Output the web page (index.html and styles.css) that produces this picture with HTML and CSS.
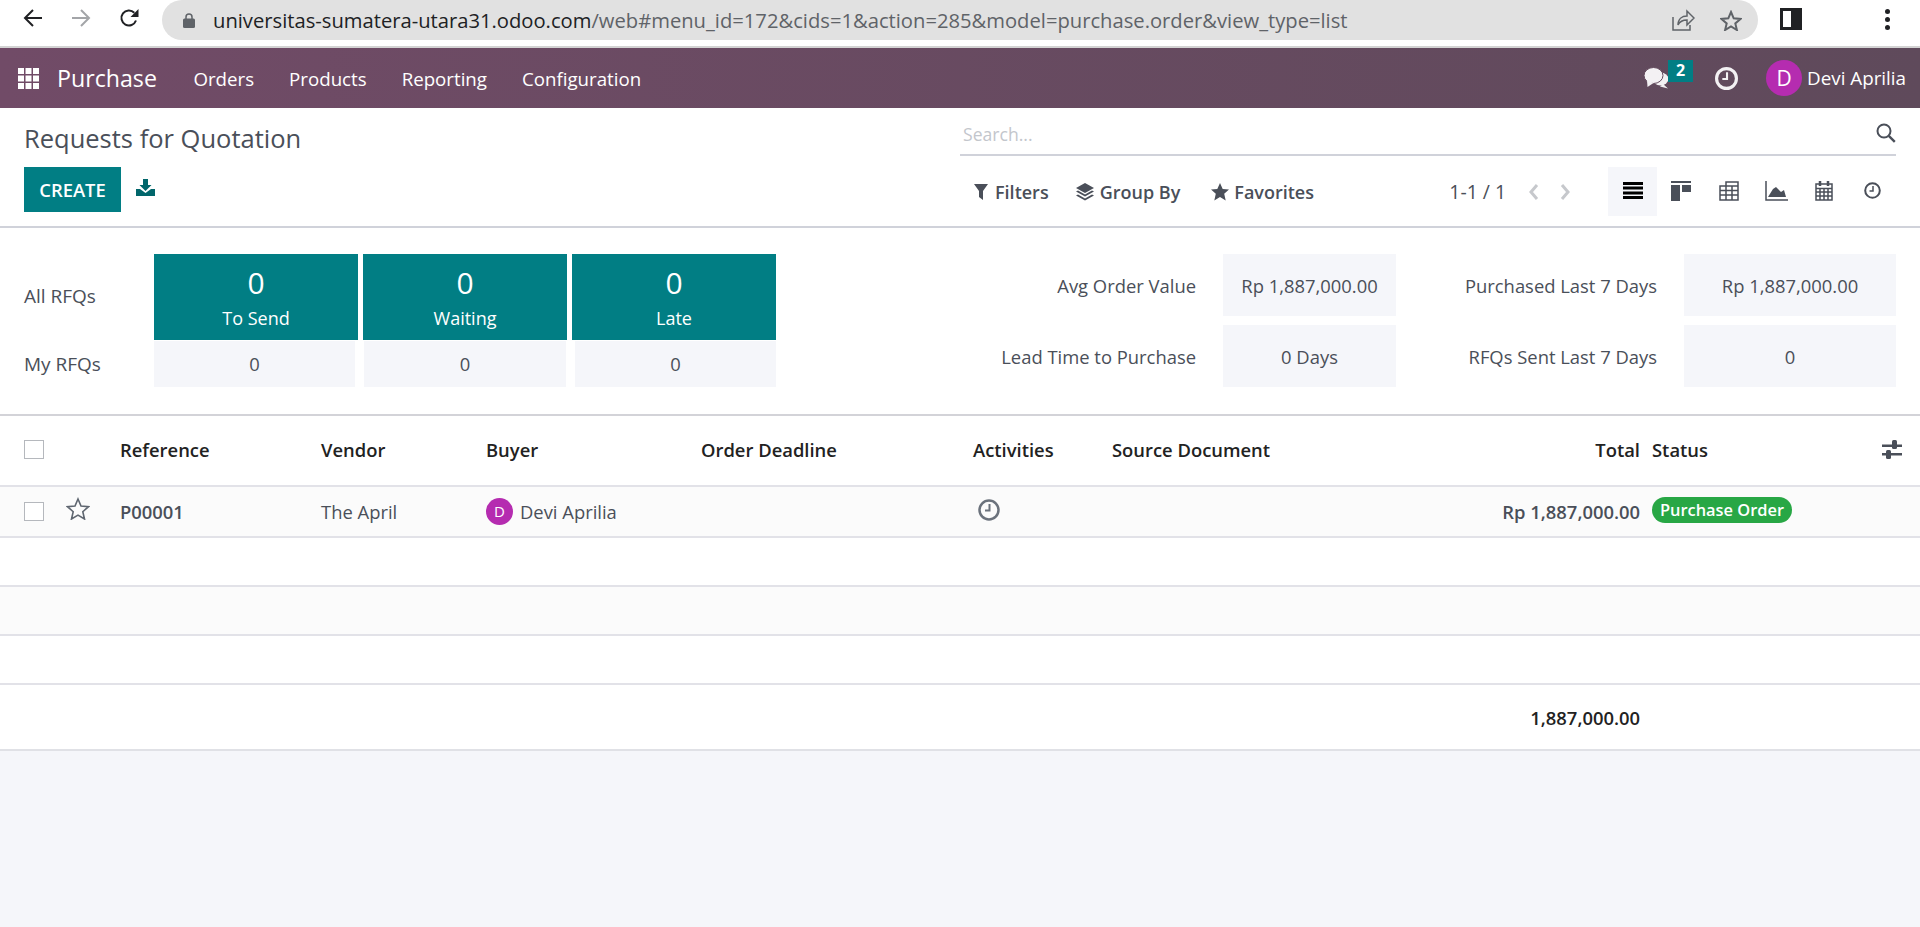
FILE: index.html
```html
<!DOCTYPE html>
<html>

<head>
    <meta http-equiv="Content-Type" content="text/html" charset="utf-8">
    <title>Requests for Quotation - Odoo</title>
    <link rel="stylesheet" href="styles.css">
</head>

<body>
    <div class="browser-bar">
        <svg class="nav-icon" viewBox="0 0 20 20"><path d="M19 10H2M10 2l-8 8 8 8" fill="none" stroke="#202124" stroke-width="2"/></svg>
        <svg class="nav-icon" viewBox="0 0 20 20"><path d="M1 10h17M10 2l8 8-8 8" fill="none" stroke="#a3a5a8" stroke-width="2"/></svg>
        <svg class="nav-icon" viewBox="0 0 20 20"><path d="M17 12.5A7.5 7.5 0 1 1 15.3 4.7" fill="none" stroke="#202124" stroke-width="2"/><path d="M19.5 1v8h-8z" fill="#202124"/></svg>
        <div class="omnibox">
            <svg class="lock" viewBox="0 0 12 15"><path d="M3 6V4a3 3 0 0 1 6 0v2" fill="none" stroke="#5f6368" stroke-width="1.5"/><rect y="5.5" width="12" height="9.5" rx="1.5" fill="#5f6368"/></svg>
            <span class="url"><span class="url-host">universitas-sumatera-utara31.odoo.com</span>/web#menu_id=172&amp;cids=1&amp;action=285&amp;model=purchase.order&amp;view_type=list</span>
            <svg class="share" viewBox="0 0 23 22"><path d="M1 8v13h17v-5M6 16c0-6 4-9 9-9V2l7 7-7 7v-5c-4 0-7 1-9 5z" fill="none" stroke="#5f6368" stroke-width="1.5"/></svg>
            <svg class="bookmark" viewBox="0 0 22 21"><path d="M11 2l2.7 6.3 6.8.6-5.2 4.5 1.6 6.6-5.9-3.500-5.900 3.500 1.600-6.600L1.500 8.900l6.800-.6z" fill="none" stroke="#5f6368" stroke-width="2"/></svg>
        </div>
        <div class="side-panel"></div>
        <div class="chrome-menu"><i></i><i></i><i></i></div>
    </div>

    <div class="navbar">
        <svg class="apps" viewBox="0 0 21 21" fill="#fff"><rect width="6" height="6"/><rect x="7.5" width="6" height="6"/><rect x="15" width="6" height="6"/><rect y="7.5" width="6" height="6"/><rect x="7.5" y="7.5" width="6" height="6"/><rect x="15" y="7.5" width="6" height="6"/><rect y="15" width="6" height="6"/><rect x="7.5" y="15" width="6" height="6"/><rect x="15" y="15" width="6" height="6"/></svg>
        <span class="brand">Purchase</span>
        <span class="menu-item">Orders</span>
        <span class="menu-item">Products</span>
        <span class="menu-item">Reporting</span>
        <span class="menu-item">Configuration</span>
        <div class="systray">
            <div class="chat">
                <svg class="chat-icon" viewBox="0 0 25 22" fill="#f3f1f3"><ellipse cx="16.5" cy="12" rx="8" ry="6.5"/><path d="M19 17l5 4.5-8-2z"/><ellipse cx="9.5" cy="8.5" rx="9.5" ry="8" stroke="#62495c" stroke-width="1"/><path d="M3 13l.5 7 6-4z"/></svg>
                <span class="chat-badge">2</span>
            </div>
            <svg class="tray-clock" viewBox="0 0 22 22"><circle cx="11" cy="11" r="9.5" fill="none" stroke="#f3f1f3" stroke-width="3"/><path d="M11.5 5v6.5H7" fill="none" stroke="#f3f1f3" stroke-width="2"/></svg>
            <span class="user-avatar">D</span>
            <span class="user-name">Devi Aprilia</span>
        </div>
    </div>

    <div class="control-panel">
        <div class="cp-left">
            <div class="title">Requests for Quotation</div>
            <div class="cp-buttons">
                <button class="create-btn">CREATE</button>
                <svg class="download" viewBox="0 0 19 17" fill="#01666b"><path d="M7 0h5v6h3.5L9.5 12 3.500 6H7z"/><path d="M0 10h4l5.500 4 5.500-4h4v7H0z"/></svg>
            </div>
        </div>
        <div class="cp-right">
            <div class="search-row">
                <span class="search-text">Search...</span>
                <svg class="search-icon" viewBox="0 0 20 20"><circle cx="8" cy="8" r="6.5" fill="none" stroke="#4a4f59" stroke-width="2"/><path d="M12.8 12.8l6 6" stroke="#4a4f59" stroke-width="2.4"/></svg>
            </div>
            <div class="tools-row">
                <span class="tool">
                    <svg class="tool-icon filter" viewBox="0 0 14 16" fill="#4a4f59"><path d="M0 0h14L9 7v9L5 13V7z"/></svg>Filters
                </span>
                <span class="tool">
                    <svg class="tool-icon layers" viewBox="0 0 20 20" fill="#4a4f59"><path d="M10 1l9 5-9 5-9-5z"/><path d="M1 9.5l2-1 7 4 7-4 2 1-9 5z"/><path d="M1 13.5l2-1 7 4 7-4 2 1-9 5z"/></svg>Group By
                </span>
                <span class="tool">
                    <svg class="tool-icon fav" viewBox="0 0 18 18" fill="#4a4f59"><path d="M9 0l2.7 6 6.3.6-4.8 4.2 1.5 6.7L9 14l-5.700 3.500 1.500-6.700L0 6.600 6.300 6z"/></svg>Favorites
                </span>
                <span class="pager">1-1 / 1</span>
                <svg class="chevron" viewBox="0 0 11 18"><path d="M9 2L3 9l6 7" fill="none" stroke="#c6c8cc" stroke-width="3"/></svg>
                <svg class="chevron next" viewBox="0 0 11 18"><path d="M2 2l6 7-6 7" fill="none" stroke="#c6c8cc" stroke-width="3"/></svg>
                <div class="views">
                    <span class="view active">
                        <svg width="20" height="17" viewBox="0 0 20 17" fill="#000"><rect width="20" height="3"/><rect y="4.5" width="20" height="3"/><rect y="9.5" width="20" height="3"/><rect y="14" width="20" height="3"/></svg>
                    </span>
                    <span class="view">
                        <svg width="20" height="20" viewBox="0 0 20 20" fill="#4a4f59"><rect width="20" height="2"/><rect y="4" width="9" height="16"/><rect x="11" y="4" width="9" height="7"/></svg>
                    </span>
                    <span class="view">
                        <svg width="20" height="20" viewBox="0 0 20 20" fill="none" stroke="#4a4f59" stroke-width="1.5"><path d="M1 5h18v14H1zM1 9.5h18M1 14h18M7 5v14M13 5v14M7 1h12v4H7z"/></svg>
                    </span>
                    <span class="view">
                        <svg width="23" height="20" viewBox="0 0 23 20" fill="#4a4f59"><path d="M1 0v19h22" fill="none" stroke="#4a4f59" stroke-width="1.5"/><path d="M3 16l5-8 3-2 5 5 3-2 2 7z"/></svg>
                    </span>
                    <span class="view">
                        <svg width="18" height="20" viewBox="0 0 18 20" fill="none" stroke="#4a4f59" stroke-width="1.5"><path d="M1 3h16v16H1zM1 7.5h16M1 11h16M1 15h16M5 7.5V19M9 7.5V19M13 7.5V19"/><path d="M5 0v5M13 0v5" stroke-width="2.5"/></svg>
                    </span>
                    <span class="view">
                        <svg width="17" height="17" viewBox="0 0 17 17" fill="none" stroke="#4a4f59"><circle cx="8.5" cy="8.5" r="7.3" stroke-width="2"/><path d="M9 4v5H5.5" stroke-width="1.5"/></svg>
                    </span>
                </div>
            </div>
        </div>
    </div>

    <div class="dashboard">
        <div class="rfq-grid">
            <span class="rfq-label top">All RFQs</span>
            <div class="tile"><b>0</b><span>To Send</span></div>
            <div class="tile"><b>0</b><span>Waiting</span></div>
            <div class="tile"><b>0</b><span>Late</span></div>
            <span class="rfq-label">My RFQs</span>
            <div class="my-cell first">0</div>
            <div class="my-cell middle">0</div>
            <div class="my-cell last">0</div>
        </div>
        <div class="stat-grid">
            <span class="stat-label">Avg Order Value</span>
            <div class="stat-box">Rp 1,887,000.00</div>
            <span class="stat-label">Purchased Last 7 Days</span>
            <div class="stat-box">Rp 1,887,000.00</div>
            <span class="stat-label">Lead Time to Purchase</span>
            <div class="stat-box">0 Days</div>
            <span class="stat-label">RFQs Sent Last 7 Days</span>
            <div class="stat-box">0</div>
        </div>
    </div>

    <table class="list">
        <colgroup>
            <col class="c-check">
            <col class="c-star">
            <col class="c-ref">
            <col class="c-vendor">
            <col class="c-buyer">
            <col class="c-deadline">
            <col class="c-activity">
            <col class="c-source">
            <col class="c-total">
            <col class="c-status">
            <col>
        </colgroup>
        <thead>
            <tr>
                <th><span class="checkbox"></span></th>
                <th></th>
                <th>Reference</th>
                <th>Vendor</th>
                <th>Buyer</th>
                <th>Order Deadline</th>
                <th>Activities</th>
                <th>Source Document</th>
                <th class="num">Total</th>
                <th class="status-col">Status</th>
                <th>
                    <svg class="options" viewBox="0 0 20 20" fill="#4a4f59"><rect y="4.5" width="20" height="2.5"/><rect x="10" y="0" width="5" height="9" rx="1.5"/><rect y="13" width="20" height="2.5"/><rect x="4" y="10" width="5" height="9" rx="1.5"/></svg>
                </th>
            </tr>
        </thead>
        <tbody>
            <tr class="row-data">
                <td><span class="checkbox"></span></td>
                <td>
                    <svg class="star" viewBox="0 0 24 23"><path d="M12 2l3 7 7.5.7-5.7 5 1.700 7.300-6.500-3.900L5.500 22l1.700-7.300-5.700-5L9 9z" fill="none" stroke="#5f6670" stroke-width="1.6"/></svg>
                </td>
                <td class="strong">P00001</td>
                <td>The April</td>
                <td><span class="buyer"><span class="buyer-avatar">D</span>Devi Aprilia</span></td>
                <td></td>
                <td>
                    <svg class="activity" viewBox="0 0 22 22"><circle cx="11" cy="11" r="9.5" fill="none" stroke="#6b727c" stroke-width="2.5"/><path d="M11.5 5v6.5H7" fill="none" stroke="#6b727c" stroke-width="2"/></svg>
                </td>
                <td></td>
                <td class="num strong">Rp 1,887,000.00</td>
                <td class="status-col"><span class="status-pill">Purchase Order</span></td>
                <td></td>
            </tr>
            <tr class="row-empty"><td colspan="11"></td></tr>
            <tr class="row-empty stripe"><td colspan="11"></td></tr>
            <tr class="row-empty"><td colspan="11"></td></tr>
        </tbody>
        <tfoot>
            <tr>
                <td colspan="8"></td>
                <td class="num sum">1,887,000.00</td>
                <td colspan="2"></td>
            </tr>
        </tfoot>
    </table>
</body>

</html>
```

FILE: styles.css
```css
html,
body {
    margin: 0;
    height: 927px;
    overflow: hidden;
}

body {
    background-color: #f5f6fa;
    font-family: 'Open Sans', 'Noto Sans', sans-serif;
    font-size: 18.4px;
    color: #4a4f59;
}

svg {
    display: block;
    flex: none;
}

/* browser chrome */
.browser-bar {
    display: flex;
    height: 46px;
    background-color: #fff;
    border-bottom: 2px solid #d3d3d3;
    padding-left: 23px;
}

.nav-icon {
    width: 20px;
    height: 20px;
    margin: 8px 28px 0 0;
}

.omnibox {
    display: flex;
    align-items: center;
    width: 1596px;
    height: 40px;
    margin-left: -5px;
    padding-left: 21px;
    box-sizing: border-box;
    background-color: #e1e1e1;
    border-radius: 20px;
}

.lock {
    width: 12px;
    height: 15px;
}

.url {
    width: 1459px;
    margin-left: 18px;
    font-size: 20.2px;
    color: #5f6368;
    white-space: nowrap;
}

.url-host {
    color: #202124;
}

.share {
    width: 23px;
    height: 22px;
}

.bookmark {
    width: 22px;
    height: 21px;
    margin-left: 25px;
}

.side-panel {
    width: 22px;
    height: 22px;
    margin: 8px 0 0 22px;
    box-sizing: border-box;
    background: linear-gradient(90deg, #fff 50%, #202124 50%);
    border: 3px solid #202124;
}

.chrome-menu {
    display: flex;
    flex-direction: column;
    gap: 3px;
    margin: 9px 0 0 83px;
}

.chrome-menu i {
    width: 5px;
    height: 5px;
    border-radius: 50%;
    background-color: #202124;
}

/* odoo navbar */
.navbar {
    display: flex;
    align-items: center;
    height: 60px;
    padding-left: 18px;
    background: linear-gradient(90deg, #714b67, #5f4a5b);
    color: #fff;
}

.apps {
    width: 21px;
    height: 21px;
    margin-right: 18px;
}

.brand {
    font-size: 23.2px;
    margin-right: 19px;
}

.menu-item {
    padding: 0 17.5px;
    font-size: 18.7px;
}

.systray {
    display: flex;
    align-items: center;
    margin-left: auto;
    padding-right: 14px;
}

.chat {
    position: relative;
    width: 49px;
    height: 48px;
}

.chat-icon {
    position: absolute;
    left: 0;
    top: 13px;
    width: 25px;
    height: 22px;
}

.chat-badge {
    position: absolute;
    left: 24px;
    top: 6px;
    width: 25px;
    height: 22px;
    background-color: #017e84;
    font-size: 16px;
    font-weight: 700;
    line-height: 20px;
    text-align: center;
}

.tray-clock {
    width: 23px;
    height: 23px;
    margin: 0 28px 0 22px;
}

.user-avatar {
    width: 36px;
    height: 36px;
    border-radius: 50%;
    background-color: #b52cb0;
    font-size: 21px;
    line-height: 36px;
    text-align: center;
}

.user-name {
    margin-left: 5px;
    font-size: 18.8px;
}

/* control panel */
.control-panel {
    display: grid;
    grid-template-columns: 960px 936px;
    height: 118px;
    background-color: #fff;
    border-bottom: 2px solid #d0d2da;
}

.cp-left {
    padding-left: 24px;
}

.title {
    height: 59px;
    padding-top: 10px;
    box-sizing: border-box;
    font-size: 25.5px;
    line-height: 40px;
}

.cp-buttons {
    display: flex;
    align-items: flex-start;
}

.create-btn {
    width: 97px;
    height: 45px;
    border: 0;
    padding: 0;
    background-color: #017e84;
    color: #fff;
    font-family: inherit;
    font-size: 18.4px;
    font-weight: 600;
}

.download {
    width: 19px;
    height: 17px;
    margin: 12px 0 0 15px;
}

.search-row {
    display: flex;
    align-items: center;
    justify-content: space-between;
    height: 48px;
    padding: 4px 0 0 3px;
    box-sizing: border-box;
    border-bottom: 2px solid #d0d2da;
}

.search-text {
    padding-top: 1px;
    color: #c3c6cc;
    font-size: 17.6px;
}

.search-icon {
    width: 20px;
    height: 20px;
}

.tools-row {
    display: flex;
    align-items: center;
    height: 49px;
    margin-top: 11px;
    padding-left: 14px;
}

.tool {
    display: flex;
    align-items: center;
    font-weight: 600;
    font-size: 18px;
    margin-right: 28px;
}

.tool-icon {
    margin-right: 5px;
}

.filter {
    width: 14px;
    height: 16px;
    margin-right: 7px;
}

.layers {
    width: 20px;
    height: 20px;
    margin-left: -2px;
}

.fav {
    width: 18px;
    height: 18px;
    margin-left: 3px;
}

.pager {
    margin-left: auto;
    margin-right: 22px;
    font-size: 19.4px;
}

.chevron {
    width: 11px;
    height: 18px;
}

.next {
    margin-left: 21px;
}

.views {
    display: flex;
    width: 288px;
    height: 49px;
    margin-left: 37px;
}

.view {
    display: flex;
    flex: 1;
    align-items: center;
    justify-content: center;
    padding-bottom: 2px;
    box-sizing: border-box;
}

.view.active {
    flex: 0 0 49px;
    background-color: #f5f6fa;
}

/* dashboard tiles */
.dashboard {
    display: flex;
    height: 186px;
    padding: 26px 24px 0;
    box-sizing: border-box;
    background-color: #fff;
}

.rfq-grid {
    display: grid;
    grid-template-columns: 125px repeat(3, 204px);
    grid-template-rows: 86px 47px;
    column-gap: 5px;
    width: 752px;
}

.rfq-label {
    align-self: center;
    font-size: 19px;
}

.rfq-label.top {
    padding-bottom: 2px;
}

.tile {
    display: flex;
    flex-direction: column;
    align-items: center;
    background-color: #017e84;
    color: #fff;
}

.tile b {
    font-weight: 400;
    font-size: 30px;
    line-height: 40px;
    margin-top: 9px;
}

.tile span {
    font-size: 18px;
    line-height: 24px;
    margin-top: 3px;
}

.my-cell {
    background-color: #f5f6fa;
    text-align: center;
    line-height: 46px;
    margin-top: 1px;
}

.my-cell.first {
    margin-right: 3px;
}

.my-cell.middle {
    margin: 1px 1px 0;
}

.my-cell.last {
    margin-left: 3px;
}

.stat-grid {
    display: grid;
    grid-template-columns: 263px 173px 288px 212px;
    grid-template-rows: 62px 62px;
    row-gap: 9px;
    margin-left: 184px;
}

.stat-label {
    align-self: center;
    justify-self: end;
    padding-right: 27px;
}

.stat-box {
    display: flex;
    align-items: center;
    justify-content: center;
    background-color: #f5f6fa;
}

/* list view */
.list {
    width: 1920px;
    border-collapse: collapse;
    table-layout: fixed;
    background-color: #fff;
}

.c-check {
    width: 60px;
}

.c-star {
    width: 55px;
}

.c-ref {
    width: 201px;
}

.c-vendor {
    width: 165px;
}

.c-buyer {
    width: 215px;
}

.c-deadline {
    width: 272px;
}

.c-activity {
    width: 139px;
}

.c-source {
    width: 233px;
}

.c-total {
    width: 305px;
}

.c-status {
    width: 225px;
}

.list th,
.list td {
    padding: 0 5px;
    text-align: left;
    white-space: nowrap;
}

.list th {
    height: 67px;
    padding-bottom: 2px;
    font-weight: 600;
    color: #222;
    border-top: 2px solid #d3d3d8;
    border-bottom: 2px solid #e2e2e8;
}

.list .num {
    text-align: right;
}

.list .status-col {
    padding-left: 7px;
}

.list th:first-child,
.list td:first-child {
    padding-left: 24px;
}

.checkbox {
    display: block;
    width: 20px;
    height: 19px;
    box-sizing: border-box;
    border: 1px solid #b5b8bd;
    background-color: #fff;
}

.options {
    width: 20px;
    height: 20px;
    margin-left: 7px;
}

.row-data td {
    height: 49px;
    background-color: #fbfbfb;
    border-bottom: 2px solid #e2e2e8;
}

.star {
    width: 24px;
    height: 23px;
    margin: -6px 0 0 1px;
}

.strong {
    font-weight: 600;
}

.buyer {
    display: flex;
    align-items: center;
}

.buyer-avatar {
    width: 27px;
    height: 27px;
    margin-right: 7px;
    border-radius: 50%;
    background-color: #b52cb0;
    color: #fff;
    font-size: 15px;
    line-height: 27px;
    text-align: center;
}

.activity {
    width: 22px;
    height: 22px;
    margin: -3px 0 0 5px;
}

.status-pill {
    display: inline-block;
    margin-top: -8px;
    padding: 0 8px;
    border-radius: 14px;
    background-color: #28a745;
    color: #fff;
    font-size: 16.4px;
    font-weight: 600;
    line-height: 26px;
    vertical-align: middle;
}

.row-empty td {
    height: 47px;
    border-bottom: 2px solid #e2e2e8;
}

.stripe td {
    background-color: #fbfbfb;
}

.list tfoot td {
    height: 64px;
    border-bottom: 2px solid #e0e1e6;
}

.list .sum {
    font-weight: 600;
    color: #222;
}
```
